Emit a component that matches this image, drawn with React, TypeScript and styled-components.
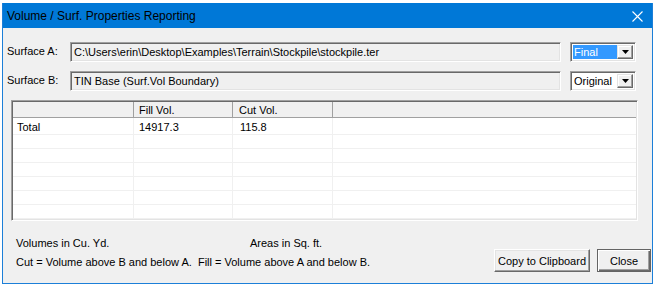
import React from 'react';
import styled, { createGlobalStyle } from 'styled-components';

const GlobalStyle = createGlobalStyle`
  html, body {
    margin: 0;
    padding: 0;
    background: #ffffff;
  }
  body {
    font-family: "Liberation Sans", Arial, sans-serif;
    font-size: 11px;
    color: #000;
  }
  * {
    box-sizing: border-box;
  }
`;

const rows = [
  { name: 'Total', fill: '14917.3', cut: '115.8' },
  { name: '', fill: '', cut: '' },
  { name: '', fill: '', cut: '' },
  { name: '', fill: '', cut: '' },
  { name: '', fill: '', cut: '' },
  { name: '', fill: '', cut: '' },
  { name: '', fill: '', cut: '' },
  { name: '', fill: '', cut: '' },
];

const CloseGlyph: React.FC = () => (
  <svg width="11" height="11" viewBox="0 0 11 11">
    <path d="M0.5 0.5 L10.5 10.5 M10.5 0.5 L0.5 10.5" stroke="#ffffff" strokeWidth="1.1" fill="none" />
  </svg>
);

const ArrowDown: React.FC = () => (
  <svg width="7" height="4" viewBox="0 0 7 4">
    <path d="M0 0 H7 L3.5 4 Z" fill="#000" />
  </svg>
);

const Combo: React.FC<{ value: string; selected?: boolean }> = ({ value, selected }) => (
  <ComboBox>
    <ComboValue $selected={selected}>{value}</ComboValue>
    <ComboButton>
      <ArrowDown />
    </ComboButton>
  </ComboBox>
);

const App: React.FC = () => {
  return (
    <>
      <GlobalStyle />
      <Window>
        <TitleBar>
          <Title>Volume / Surf. Properties Reporting</Title>
          <CloseBox>
            <CloseGlyph />
          </CloseBox>
        </TitleBar>

        <Body>
          <Form>
            <Label>Surface A:</Label>
            <TextBox>C:\Users\erin\Desktop\Examples\Terrain\Stockpile\stockpile.ter</TextBox>
            <Combo value="Final" selected />

            <Label>Surface B:</Label>
            <TextBox>TIN Base (Surf.Vol Boundary)</TextBox>
            <Combo value="Original" />
          </Form>

          <ListView>
            <HeaderRow>
              <HeaderCell $width={121} $pad={4}></HeaderCell>
              <HeaderCell $width={99} $pad={5}>Fill Vol.</HeaderCell>
              <HeaderCell $width={100} $pad={6}>Cut Vol.</HeaderCell>
              <HeaderCell $pad={6}></HeaderCell>
            </HeaderRow>
            <RowsArea>
              {rows.map((r, i) => (
                <Row key={i} $first={i === 0}>
                  <Cell $width={121} $pad={4}>{r.name}</Cell>
                  <Cell $width={99} $pad={5}>{r.fill}</Cell>
                  <Cell $width={100} $pad={7}>{r.cut}</Cell>
                  <Cell $pad={6}></Cell>
                </Row>
              ))}
            </RowsArea>
          </ListView>

          <Footer>
            <Notes>
              <NoteLine>
                <NoteText $width={234}>Volumes in Cu. Yd.</NoteText>
                <NoteText>Areas in Sq. ft.</NoteText>
              </NoteLine>
              <NoteLine>
                <NoteText>Cut = Volume above B and below A.&nbsp; Fill = Volume above A and below B.</NoteText>
              </NoteLine>
            </Notes>
            <Buttons>
              <Button $width={96}>Copy to Clipboard</Button>
              <Button $width={54} $default>Close</Button>
            </Buttons>
          </Footer>
        </Body>
      </Window>
    </>
  );
};

const Window = styled.div`
  margin: 3px 0 0 2px;
  width: 651px;
  height: 281px;
  border: 1px solid #1c7fd8;
  border-top: none;
  display: flex;
  flex-direction: column;
  background: #f0f0f0;
`;

const TitleBar = styled.div`
  height: 25px;
  background: #0078d7;
  display: flex;
  align-items: center;
  justify-content: space-between;
  padding: 0 9px 0 4px;
`;

const Title = styled.span`
  font-family: "Segoe UI", "Liberation Sans", Arial, sans-serif;
  font-size: 12px;
  color: #000;
  padding-top: 1px;
`;

const CloseBox = styled.div`
  width: 11px;
  height: 11px;
  display: flex;
  margin-top: 1px;
`;

const Body = styled.div`
  flex: 1;
  display: flex;
  flex-direction: column;
  padding-top: 14px;
`;

const Form = styled.div`
  display: grid;
  grid-template-columns: 63px 491px 66px;
  grid-auto-rows: 20px;
  column-gap: 0;
  row-gap: 9px;
  margin-left: 4px;
`;

const Label = styled.div`
  line-height: 16px;
  padding-top: 1px;
`;

const sunken = `
  border: 1px solid;
  border-color: #a0a0a0 #ffffff #ffffff #a0a0a0;
  box-shadow: inset 1px 1px 0 #696969, inset -1px -1px 0 #e3e3e3;
`;

const TextBox = styled.div`
  ${sunken}
  background: #f0f0f0;
  padding: 0 3px;
  line-height: 18px;
  white-space: nowrap;
  overflow: hidden;
`;

const ComboBox = styled.div`
  ${sunken}
  margin-left: 9px;
  width: 66px;
  background: #ffffff;
  display: flex;
  padding: 2px;
`;

const ComboValue = styled.div<{ $selected?: boolean }>`
  flex: 1;
  line-height: 14px;
  padding-left: 1px;
  background: ${({ $selected }) => ($selected ? '#3399ff' : '#ffffff')};
  color: ${({ $selected }) => ($selected ? '#ffffff' : '#000000')};
`;

const ComboButton = styled.div`
  width: 16px;
  background: #f0f0f0;
  border: 1px solid;
  border-color: #e3e3e3 #696969 #696969 #e3e3e3;
  box-shadow: inset -1px -1px 0 #a0a0a0, inset 1px 1px 0 #ffffff;
  display: flex;
  align-items: center;
  justify-content: center;
`;

const ListView = styled.div`
  ${sunken}
  margin: 9px 0 0 8px;
  width: 627px;
  height: 121px;
  padding: 1px;
  background: #ffffff;
  display: flex;
  flex-direction: column;
  overflow: hidden;
`;

const HeaderRow = styled.div`
  display: flex;
  height: 16px;
  flex-shrink: 0;
  background: #f0f0f0;
  border-bottom: 1px solid #a0a0a0;
`;

const HeaderCell = styled.div<{ $width?: number; $pad: number }>`
  ${({ $width }) => ($width ? `width: ${$width}px;` : 'flex: 1;')}
  flex-shrink: 0;
  padding-left: ${({ $pad }) => $pad}px;
  padding-top: 2px;
  line-height: 13px;
  border-right: 1px solid #a0a0a0;
  &:last-child {
    border-right: none;
  }
`;

const RowsArea = styled.div`
  flex: 1;
  overflow: hidden;
`;

const Row = styled.div<{ $first?: boolean }>`
  display: flex;
  height: ${({ $first }) => ($first ? 17 : 14)}px;
  border-bottom: 1px solid #f0f0f0;
`;

const Cell = styled.div<{ $width?: number; $pad: number }>`
  ${({ $width }) => ($width ? `width: ${$width}px;` : 'flex: 1;')}
  flex-shrink: 0;
  padding-left: ${({ $pad }) => $pad}px;
  line-height: 13px;
  padding-top: 3px;
  border-right: 1px solid #f0f0f0;
  &:last-child {
    border-right: none;
  }
`;

const Footer = styled.div`
  display: flex;
  justify-content: space-between;
  align-items: flex-end;
  margin-top: 13px;
  padding: 0 1px 0 13px;
`;

const Notes = styled.div`
  display: flex;
  flex-direction: column;
`;

const NoteLine = styled.div`
  display: flex;
  line-height: 19px;
  white-space: nowrap;
`;

const NoteText = styled.span<{ $width?: number }>`
  ${({ $width }) => ($width ? `width: ${$width}px;` : '')}
`;

const Buttons = styled.div`
  display: flex;
  gap: 7px;
  margin-bottom: 0;
`;

const Button = styled.button<{ $width: number; $default?: boolean }>`
  width: ${({ $width }) => $width}px;
  height: 23px;
  font-family: "Liberation Sans", Arial, sans-serif;
  font-size: 11px;
  color: #000;
  background: #f0f0f0;
  padding: 0;
  border: 1px solid;
  border-color: ${({ $default }) =>
    $default ? '#646464' : '#ffffff #696969 #696969 #ffffff'};
  box-shadow: ${({ $default }) =>
    $default
      ? 'inset 1px 1px 0 #ffffff, inset -1px -1px 0 #696969, inset -2px -2px 0 #a0a0a0'
      : 'inset -1px -1px 0 #a0a0a0, inset 1px 1px 0 #e3e3e3'};
`;

export default App;
